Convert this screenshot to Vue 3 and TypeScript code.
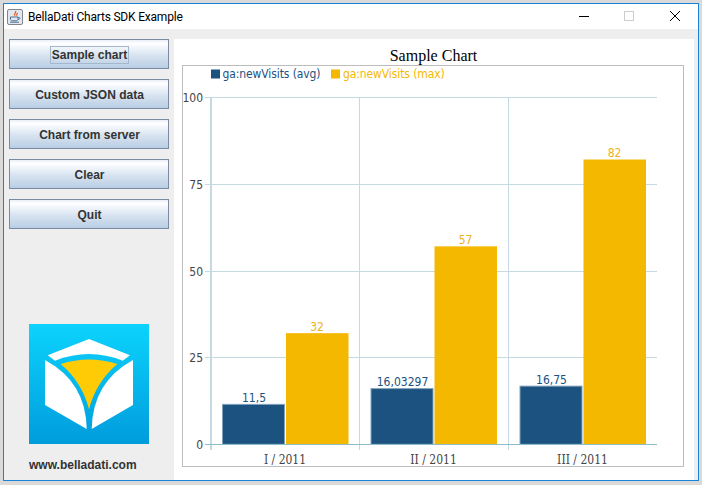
<script setup lang="ts">
const buttons = ['Sample chart', 'Custom JSON data', 'Chart from server', 'Clear', 'Quit']

// plot area, same numbers as the swing window coordinates
const baseY = 444.3
const unit = 3.473

const groups = [
  { name: 'I / 2011', center: 285, avg: 11.5, avgLabel: '11,5', max: 32 },
  { name: 'II / 2011', center: 433.5, avg: 16.03297, avgLabel: '16,03297', max: 57 },
  { name: 'III / 2011', center: 582.5, avg: 16.75, avgLabel: '16,75', max: 82 }
]
const ticks = [100, 75, 50, 25, 0]

function valueY(v: number): number {
  return baseY - v * unit
}

// snap grid lines to a whole pixel row
function gridY(v: number): number {
  return Math.round(valueY(v)) + 0.5
}
</script>

<template>
  <div class="window">
    <div class="titlebar">
      <svg class="app-icon" width="16" height="16" viewBox="0 0 16 16">
        <rect x="0.5" y="0.5" width="15" height="15" rx="1.5" fill="#e4e8ee" stroke="#7d8792" />
        <path d="M8.500 2c1.200 1.700-2 2.700-.6 4.600M10.200 3.800c.6 1-1.200 1.600-.4 2.800" fill="none" stroke="#e2612a" stroke-width="1.300" />
        <path d="M3.500 8h7.500v2c0 1.200-1 1.800-2 1.800H5.500c-1 0-2-.6-2-1.800zM11 8.500h1.200c1 0 1 2-.9 2" fill="none" stroke="#4a6f96" stroke-width="1" />
        <path d="M3 13.200h9" stroke="#4a6f96" stroke-width="1" />
      </svg>
      <span class="title">BellaDati Charts SDK Example</span>
      <div class="controls">
        <svg width="101" height="12" viewBox="0 0 101 12">
          <path d="M0 5.500h10" stroke="#000" />
          <rect x="45.500" y="0.500" width="9" height="9" fill="none" stroke="#ccc" />
          <path d="M91 0l10 10M101 0L91 10" stroke="#000" />
        </svg>
      </div>
    </div>

    <div class="content">
      <aside class="sidebar">
        <button v-for="(b, i) in buttons" :key="b" class="btn">
          <span :class="{ focused: i === 0 }">{{ b }}</span>
        </button>
        <svg class="logo" width="120" height="120" viewBox="0 0 120 120">
          <defs>
            <linearGradient id="logoBg" x1="0" y1="0" x2="0" y2="1">
              <stop offset="0" stop-color="#0cd3fd" />
              <stop offset="1" stop-color="#009cdc" />
            </linearGradient>
          </defs>
          <rect width="120" height="120" fill="url(#logoBg)" />
          <path d="M18.700 31.300L60 15l41 16.300-7.300 5.400Q60 23.500 26 36.700z" fill="#fff" />
          <path d="M31.700 40Q60 31 88.300 40 67 58 60 85.300 53 58 31.700 40z" fill="#ffcb05" />
          <path d="M16 36Q57 58 57.700 105L16 81z" fill="#fff" />
          <path d="M104 36Q63.500 58 62.700 105L104 81z" fill="#fff" />
        </svg>
        <div class="site">www.belladati.com</div>
      </aside>

      <main class="panel">
        <h1 class="chart-title">Sample Chart</h1>
        <div class="chart-box">
          <!-- viewBox keeps window coordinates so the numbers read off the screenshot -->
          <svg class="chart" width="500" height="400" viewBox="183 66 500 400">
            <rect x="211" y="69.500" width="9" height="9" fill="#1b527f" />
            <text x="222.500" y="77.500" class="lbl legend" fill="#1b527f">ga:newVisits (avg)</text>
            <rect x="331" y="69.500" width="9" height="9" fill="#f4b800" />
            <text x="343" y="77.500" class="lbl legend" fill="#f4b800">ga:newVisits (max)</text>

            <line v-for="t in ticks.slice(0, 4)" :key="t" x1="205" x2="657" :y1="gridY(t)" :y2="gridY(t)" stroke="#c5d9e2" />
            <line x1="211" x2="211" y1="97" y2="450" stroke="#c5d9e2" stroke-width="2" />
            <line x1="359.500" x2="359.500" y1="97" y2="450" stroke="#c5d9e2" />
            <line x1="508.500" x2="508.500" y1="97" y2="450" stroke="#c5d9e2" />

            <text v-for="t in ticks" :key="'y' + t" x="203" :y="valueY(t) + 5" class="lbl axis" text-anchor="end">{{ t }}</text>

            <g v-for="g in groups" :key="g.name">
              <rect :x="g.center - 62.500" :y="valueY(g.avg)" width="62" :height="g.avg * unit" fill="#1b527f" stroke="#7fa3bb" stroke-width="1" />
              <rect :x="g.center + 1" :y="valueY(g.max)" width="62.500" :height="g.max * unit" fill="#f4b800" />
              <text :x="g.center - 31" :y="valueY(g.avg) - 2.500" class="lbl" fill="#1b527f" text-anchor="middle">{{ g.avgLabel }}</text>
              <text :x="g.center + 32" :y="valueY(g.max) - 2.500" class="lbl" fill="#f0b020" text-anchor="middle">{{ g.max }}</text>
              <text :x="g.center" y="463.500" class="cat" text-anchor="middle">{{ g.name }}</text>
            </g>

            <line x1="205" x2="657" y1="444.500" y2="444.500" stroke="#8dbccb" />
          </svg>
        </div>
      </main>
    </div>
  </div>
</template>

<style>
html,
body {
  margin: 0;
  background: #dadada;
}
</style>

<style scoped>
.window {
  box-sizing: border-box;
  width: 696px;
  height: 478px;
  margin: 3px 3px 0;
  border: 1px solid #1883d7;
  background: #eeeeee;
  display: flex;
  flex-direction: column;
  overflow: hidden;
}

.titlebar {
  height: 25px;
  flex: none;
  background: #fff;
  display: flex;
  align-items: center;
  padding-left: 3px;
}

.app-icon {
  flex: none;
}

.title {
  margin-left: 5px;
  font: 12px Roboto, sans-serif;
  letter-spacing: -0.2px;
  color: #000;
}

.controls {
  margin-left: auto;
  margin-right: 18px;
  height: 12px;
}

.controls svg {
  display: block;
}

.content {
  flex: 1;
  display: flex;
  padding-top: 10px;
  min-height: 0;
}

.sidebar {
  width: 170px;
  flex: none;
  box-sizing: border-box;
  padding-left: 5px;
  display: flex;
  flex-direction: column;
  gap: 10px;
}

.btn {
  width: 160px;
  height: 30px;
  flex: none;
  padding: 2px 0 0 1px;
  border: 1px solid #7a8a9f;
  background: linear-gradient(#e8eff7 0, #ffffff 12%, #dce6f2 50%, #b9cde3 100%);
  font: bold 12px 'Liberation Sans', Arial, sans-serif;
  color: #333;
  display: flex;
  align-items: center;
  justify-content: center;
}

.focused {
  border: 1px solid #a3b8cc;
  padding: 1px 1px;
}

.logo {
  display: block;
  flex: none;
  margin: 85px 0 0 20px;
}

.site {
  margin: 4px 0 0 20px;
  font: bold 12px 'Liberation Sans', Arial, sans-serif;
  color: #333;
}

.panel {
  width: 520px;
  flex: none;
  background: #fff;
  box-sizing: border-box;
  padding: 9px 10px 0 8px;
  display: flex;
  flex-direction: column;
}

.chart-title {
  margin: 0;
  height: 17px;
  padding-left: 1px;
  font: normal 16px/16px 'Liberation Serif', 'Times New Roman', serif;
  color: #000;
  text-align: center;
}

.chart-box {
  box-sizing: border-box;
  width: 502px;
  height: 402px;
  border: 1px solid #bdbdbd;
}

.chart {
  display: block;
}

.lbl {
  font: 12px 'DejaVu Sans Condensed', 'DejaVu Sans', sans-serif;
}

.legend {
  letter-spacing: -0.1px;
}

.axis {
  fill: #444;
}

.cat {
  font: 12px 'DejaVu Serif Condensed', 'DejaVu Serif', serif;
  fill: #444;
}
</style>
